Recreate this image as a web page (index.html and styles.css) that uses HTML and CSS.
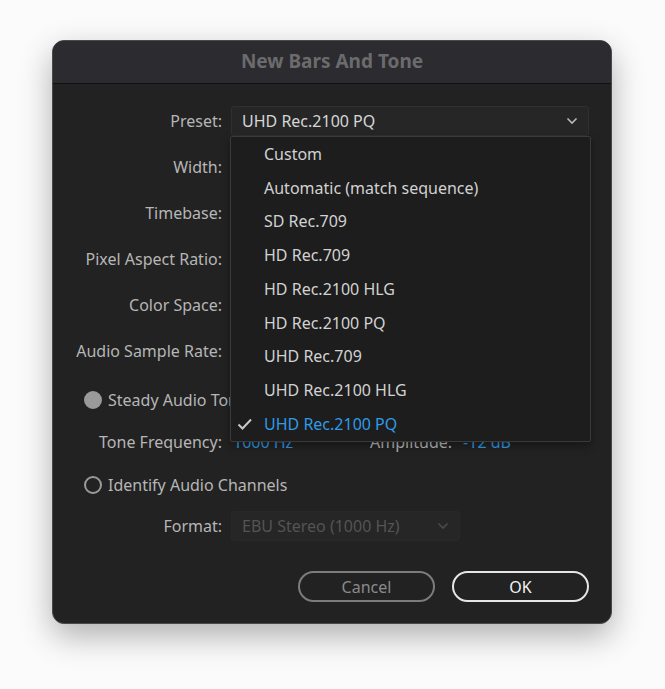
FILE: index.html
```html
<!DOCTYPE html>
<html lang="en">
  <head>
    <meta name="viewport" content="width=device-width, initial-scale=1">
    <link rel="stylesheet" href="styles.css">
    <title>New Bars And Tone</title>
  </head>

  <body>
    <div class="dialog">
      <div class="titleBar">New Bars And Tone</div>

      <div class="content">
        <div class="formGrid">
          <span class="label">Preset:</span>
          <div class="select">
            <span>UHD Rec.2100 PQ</span>
            <svg class="chevron" width="12" height="8" viewBox="0 0 12 8"><path d="M1.5 1.5 L6 6 L10.5 1.5" fill="none" stroke="#b8b8b8" stroke-width="1.6"/></svg>
          </div>

          <!-- values of these rows sit under the open menu -->
          <span class="label">Width:</span>
          <span class="value"></span>

          <span class="label">Timebase:</span>
          <span class="value"></span>

          <span class="label">Pixel Aspect Ratio:</span>
          <span class="value"></span>

          <span class="label">Color Space:</span>
          <span class="value"></span>

          <span class="label">Audio Sample Rate:</span>
          <span class="value"></span>
        </div>

        <div class="radioRow steadyRow">
          <span class="radio filled"></span>
          <span>Steady Audio Tone</span>
        </div>

        <div class="toneRow">
          <span class="label">Tone Frequency:</span>
          <span class="blueValue freq">1000 Hz</span>
          <span class="label amplitude">Amplitude:</span>
          <span class="blueValue">-12 dB</span>
        </div>

        <div class="radioRow identifyRow">
          <span class="radio"></span>
          <span>Identify Audio Channels</span>
        </div>

        <div class="formatRow">
          <span class="label">Format:</span>
          <div class="select disabled">
            <span>EBU Stereo (1000 Hz)</span>
            <svg class="chevron" width="12" height="8" viewBox="0 0 12 8"><path d="M1.5 1.5 L6 6 L10.5 1.5" fill="none" stroke="#4a4a4a" stroke-width="1.6"/></svg>
          </div>
        </div>

        <div class="buttons">
          <button class="cancelButton">Cancel</button>
          <button class="okButton">OK</button>
        </div>
      </div>

      <!-- open preset menu -->
      <ul class="menu">
        <li>Custom</li>
        <li>Automatic (match sequence)</li>
        <li>SD Rec.709</li>
        <li>HD Rec.709</li>
        <li>HD Rec.2100 HLG</li>
        <li>HD Rec.2100 PQ</li>
        <li>UHD Rec.709</li>
        <li>UHD Rec.2100 HLG</li>
        <li class="selected">
          <svg class="check" width="16" height="14" viewBox="0 0 16 14"><path d="M1.5 7.5 L5.5 11.5 L14 2.5" fill="none" stroke="#c9c9c9" stroke-width="2"/></svg>
          UHD Rec.2100 PQ
        </li>
      </ul>
    </div>
  </body>
</html>
```

FILE: styles.css
```css
html {
  background-color: #fbfbfb;
}

body {
  margin: 0;
  padding: 40px 0 0 52px;
  min-height: 689px;
  box-sizing: border-box;
  font-family: "Noto Sans", Arial, sans-serif;
  font-size: 16px;
}

.dialog {
  position: relative;
  width: 558px;
  height: 582px;
  background-color: #222222;
  border: 1px solid #4a4a4c;
  border-radius: 12px;
  box-shadow: 0 12px 32px rgba(0, 0, 0, 0.3);
  overflow: hidden;
}

.titleBar {
  height: 42px;
  line-height: 40px;
  text-align: center;
  background-color: #2c2b2f;
  border-bottom: 1px solid #111111;
  color: #6b6b6d;
  font-size: 19px;
  font-weight: bold;
}

.content {
  padding: 22px 22px 0 0;
  color: #b6b6b6;
}

.label {
  color: #b6b6b6;
  text-align: right;
  white-space: nowrap;
}

.formGrid {
  display: grid;
  grid-template-columns: 169px 1fr;
  column-gap: 9px;
  row-gap: 16px;
  align-items: center;
}
.formGrid > * {
  height: 30px;
  line-height: 30px;
}

.select {
  display: flex;
  align-items: center;
  justify-content: space-between;
  box-sizing: border-box;
  padding: 0 10px;
  background-color: #262626;
  border: 1px solid #303030;
  border-radius: 3px;
  color: #d6d6d6;
}
.select.disabled {
  width: 229px;
  height: 30px;
  color: #545454;
  border-color: #282828;
}

.radioRow {
  display: flex;
  align-items: center;
  height: 30px;
  padding-left: 31px;
  gap: 6px;
  color: #b6b6b6;
}
.steadyRow {
  margin-top: 19px;
}
.identifyRow {
  margin-top: 13px;
}

.radio {
  width: 18px;
  height: 18px;
  box-sizing: border-box;
  border: 2px solid #9a9a9a;
  border-radius: 50%;
}
.radio.filled {
  background-color: #9a9a9a;
}

.toneRow {
  display: flex;
  align-items: center;
  height: 30px;
  margin-top: 12px;
}
.toneRow .label {
  width: 169px;
}
.toneRow .amplitude {
  width: auto;
}
.blueValue {
  color: #2f9ae6;
  margin-left: 11px;
}
.blueValue.freq {
  width: 137px;
}

.formatRow {
  display: flex;
  align-items: center;
  gap: 9px;
  height: 30px;
  margin-top: 11px;
}
.formatRow .label {
  width: 169px;
}

.buttons {
  display: flex;
  justify-content: flex-end;
  gap: 17px;
  margin-top: 30px;
}
.buttons button {
  width: 137px;
  height: 31px;
  border-radius: 16px;
  background-color: transparent;
  font-family: "Noto Sans", Arial, sans-serif;
  font-size: 16px;
  cursor: pointer;
}
.cancelButton {
  border: 2px solid #7c7c7c;
  color: #8a8a8a;
}
.okButton {
  border: 2px solid #e6e6e6;
  color: #f2f2f2;
}

.menu {
  position: absolute;
  left: 177px;
  top: 95px;
  width: 359px;
  margin: 0;
  padding: 0;
  list-style: none;
  background-color: #1d1d1d;
  border: 1px solid #3a3a3a;
  border-radius: 2px;
  box-shadow: 0 4px 10px rgba(0, 0, 0, 0.35);
}
.menu li {
  display: flex;
  align-items: center;
  height: 33.75px;
  padding-left: 33px;
  color: #d2d2d2;
}
.menu li.selected {
  position: relative;
  color: #2f9ae6;
}
.menu .check {
  position: absolute;
  left: 6px;
}
```
